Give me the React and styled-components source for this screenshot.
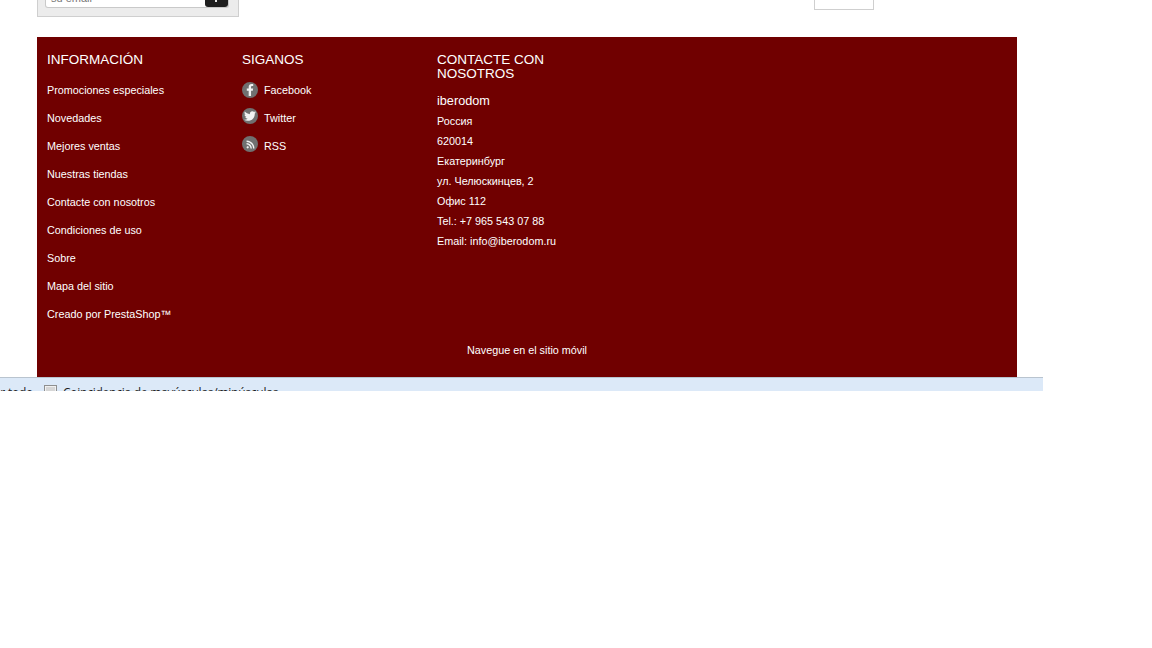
import React from "react";
import styled, { createGlobalStyle } from "styled-components";
import { FaFacebookF, FaTwitter, FaRss } from "react-icons/fa";

const infoLinks = [
  "Promociones especiales",
  "Novedades",
  "Mejores ventas",
  "Nuestras tiendas",
  "Contacte con nosotros",
  "Condiciones de uso",
  "Sobre",
  "Mapa del sitio",
  "Creado por PrestaShop™",
];

const socialLinks = [
  { title: "Facebook", icon: <FaFacebookF />, lift: 0, size: 12 },
  { title: "Twitter", icon: <FaTwitter />, lift: 2, size: 12 },
  { title: "RSS", icon: <FaRss />, lift: 2, size: 9 },
];

const contactRows = [
  "Россия",
  "620014",
  "Екатеринбург",
  "ул. Челюскинцев, 2",
  "Офис 112",
  "Tel.: +7 965 543 07 88",
  "Email: info@iberodom.ru",
];

const App = () => {
  return (
    <Page>
      <GlobalStyle />
      <TopRow>
        <SearchBlock>
          <SearchField>
            <SearchText>su email</SearchText>
            <SearchButton>
              <ButtonArrow />
            </SearchButton>
          </SearchField>
        </SearchBlock>
        <CornerBox />
      </TopRow>

      <Footer>
        <Columns>
          <Column>
            <Heading>INFORMACIÓN</Heading>
            {infoLinks.map((link) => (
              <LinkRow key={link}>{link}</LinkRow>
            ))}
          </Column>
          <Column>
            <Heading>SIGANOS</Heading>
            {socialLinks.map((link) => (
              <LinkRow key={link.title}>
                <SocialIcon $lift={link.lift} $size={link.size}>
                  {link.icon}
                </SocialIcon>
                {link.title}
              </LinkRow>
            ))}
          </Column>
          <Column>
            <Heading>
              CONTACTE CON
              <br />
              NOSOTROS
            </Heading>
            <ShopName>iberodom</ShopName>
            {contactRows.map((row) => (
              <ContactRow key={row}>{row}</ContactRow>
            ))}
          </Column>
        </Columns>
        <MobileLink>Navegue en el sitio móvil</MobileLink>
      </Footer>

      <FindBar>
        <FindLabel>Resaltar todo</FindLabel>
        <FindCheck />
        <FindOption>Coincidencia de mayúsculas/minúsculas</FindOption>
      </FindBar>
    </Page>
  );
};

const GlobalStyle = createGlobalStyle`
  html, body {
    margin: 0;
    padding: 0;
    background: #fff;
  }
`;

const Page = styled.div`
  width: 1152px;
  height: 648px;
  overflow: hidden;
  background: #fff;
  font-family: "Liberation Sans", Arial, sans-serif;
`;

const TopRow = styled.div`
  display: flex;
  align-items: flex-start;
  height: 37px;
  padding-left: 37px;
`;

const SearchBlock = styled.div`
  box-sizing: border-box;
  display: flex;
  align-items: flex-end;
  width: 202px;
  height: 17px;
  padding: 0 9px 8px 7px;
  overflow: hidden;
  background: #ececec;
  border: 1px solid #cfcfcf;
  border-top: none;
`;

const SearchField = styled.div`
  box-sizing: border-box;
  display: flex;
  justify-content: space-between;
  align-items: flex-end;
  width: 184px;
  height: 8px;
  background: #fff;
  border: 1px solid #c9c9c9;
  border-top: none;
  border-radius: 0 0 3px 3px;
`;

const SearchText = styled.span`
  display: flex;
  align-items: flex-end;
  height: 4px;
  padding: 0 0 3px 5px;
  overflow: hidden;
  font-size: 11px;
  line-height: 11px;
  color: #777;
`;

const SearchButton = styled.div`
  display: flex;
  justify-content: center;
  width: 23px;
  height: 7px;
  background: #1f1f1f;
  border-radius: 0 0 3px 3px;
`;

const ButtonArrow = styled.span`
  width: 2px;
  height: 2px;
  margin-right: 1px;
  background: #e8e8e8;
`;

const CornerBox = styled.div`
  box-sizing: border-box;
  width: 60px;
  height: 10px;
  margin-left: 575px;
  background: #fff;
  border: 1px solid #cfcfcf;
  border-top: none;
`;

const Footer = styled.footer`
  box-sizing: border-box;
  width: 980px;
  height: 340px;
  margin-left: 37px;
  padding-top: 15px;
  background: #700000;
  color: #fff;
`;

const Columns = styled.div`
  display: grid;
  grid-template-columns: repeat(3, 195px);
  height: 276px;
  padding-left: 10px;
`;

const Column = styled.div`
  display: flex;
  flex-direction: column;
  align-items: flex-start;
`;

const Heading = styled.h4`
  margin: 0 0 9px;
  padding-top: 1px;
  font-size: 13.5px;
  line-height: 14px;
  font-weight: 400;
`;

const LinkRow = styled.div`
  display: flex;
  align-items: center;
  height: 28px;
  font-size: 10.8px;
  line-height: 28px;
`;

const SocialIcon = styled.span`
  display: flex;
  justify-content: center;
  align-items: center;
  width: 16px;
  height: 16px;
  margin-right: 6px;
  margin-bottom: ${(props) => props.$lift * 2}px;
  border-radius: 50%;
  background: #707070;
  color: #f2f2f2;
  font-size: ${(props) => props.$size}px;
`;

const ShopName = styled.div`
  height: 21px;
  font-size: 12.7px;
  line-height: 23px;
`;

const ContactRow = styled.div`
  height: 20px;
  font-size: 10.8px;
  line-height: 20px;
`;

const MobileLink = styled.div`
  margin-top: 15px;
  text-align: center;
  font-size: 10.8px;
  line-height: 14px;
`;

const FindBar = styled.div`
  box-sizing: border-box;
  display: flex;
  align-items: flex-start;
  width: 1043px;
  height: 14px;
  padding-top: 7px;
  overflow: hidden;
  background: #dce9f8;
  border-top: 1px solid #b9c4cf;
  font-family: "Open Sans", "Noto Sans", sans-serif;
  font-size: 12px;
  letter-spacing: -0.24px;
  line-height: 16px;
  color: #1c1c1c;
`;

const FindLabel = styled.div`
  display: flex;
  justify-content: flex-end;
  flex-shrink: 0;
  width: 33px;
  overflow: hidden;
  white-space: nowrap;
`;

const FindCheck = styled.span`
  flex-shrink: 0;
  box-sizing: border-box;
  width: 13px;
  height: 13px;
  margin: 0 6px 0 11px;
  background: #d6d6d6;
  border: 1px solid #8e8f8f;
  box-shadow: inset 0 0 0 1px #f0f0f0;
`;

const FindOption = styled.div`
  white-space: nowrap;
`;

export default App;
